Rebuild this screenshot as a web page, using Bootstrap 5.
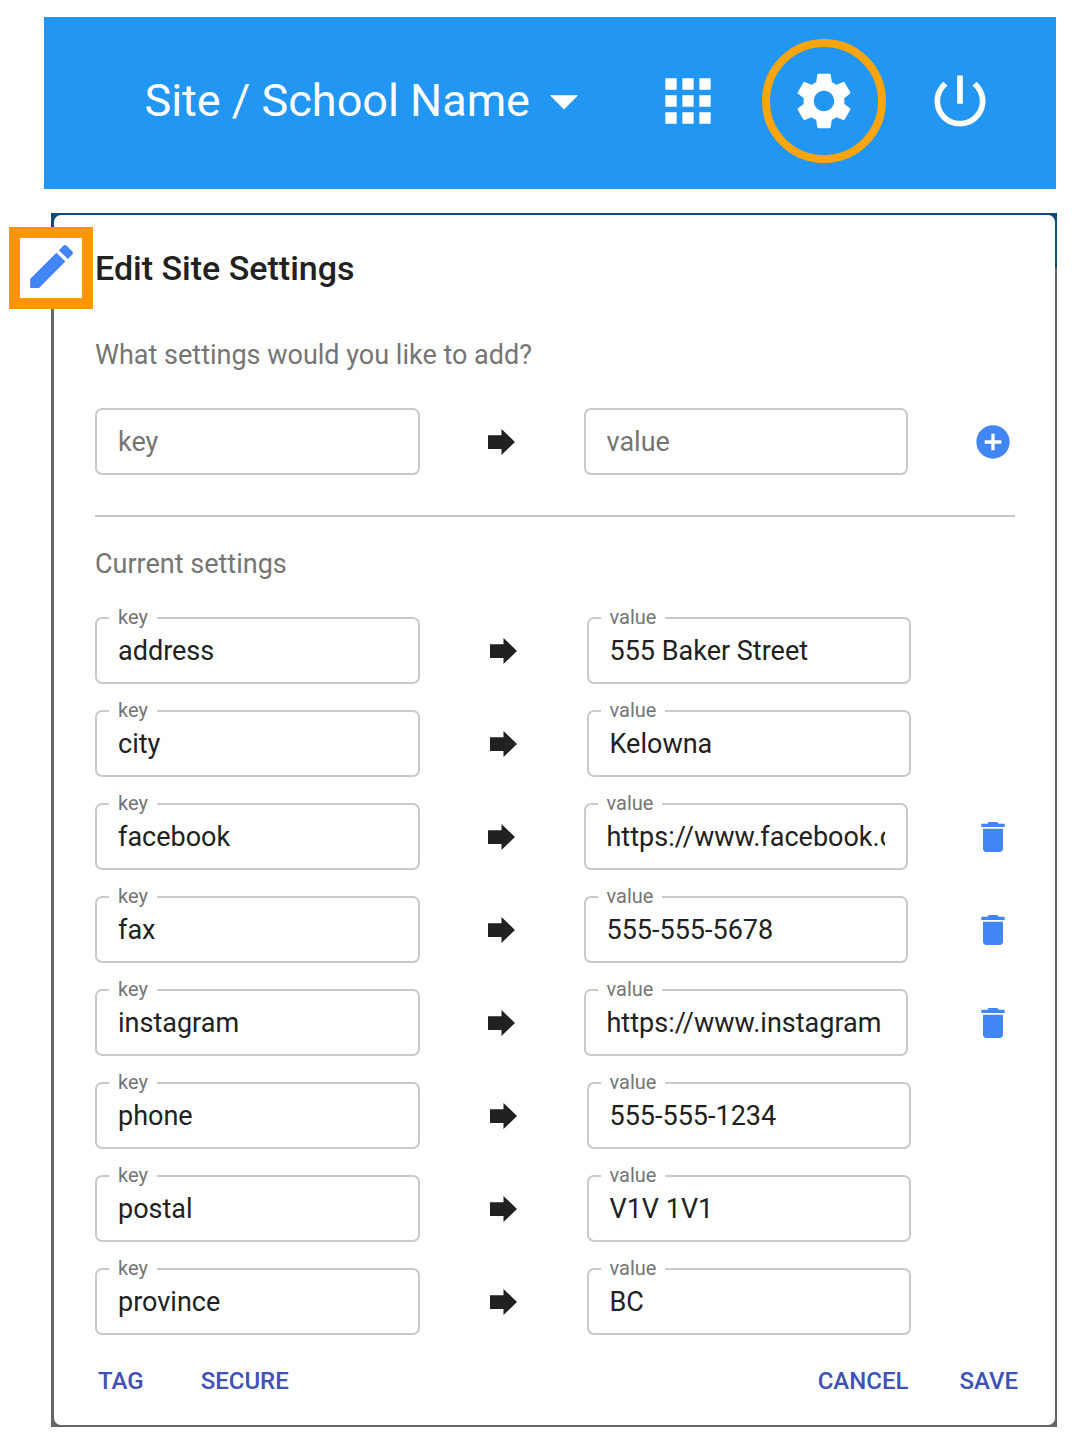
<!DOCTYPE html>
<html lang="en">
<head>
<meta charset="utf-8">
<meta name="viewport" content="width=device-width, initial-scale=1">
<title>Edit Site Settings</title>
<link href="https://cdn.jsdelivr.net/npm/bootstrap@5.3.0/dist/css/bootstrap.min.css" rel="stylesheet">
<style>
  body { font-family: Roboto, sans-serif; color: #212121; background: #fff; }
  svg { display: block; fill: currentColor; flex: none; }
  .bare { border: 0; background: none; padding: 0; color: inherit; }

  .app-bar { margin: 17px 26px 0 44px; padding: 22px 62px 26px 24px; background: #2196f3; color: #fff; }
  .app-bar svg { width: 68px; height: 68px; }
  .site-menu { font-size: 45px; line-height: 48px; margin-right: 56px; }
  .app-icons { gap: 40px; }
  .ringed { width: 124px; height: 124px; border: 8px solid #ffa50a; border-radius: 50%; }

  .backdrop-frame { margin: 24px 25px 21px 51px; padding: 2px 2px 2px 3px; background: linear-gradient(#0f4c7a 55px, #666 55px); }
  .settings-dialog { background: #fff; border-radius: 7px; padding: 29px 37px 26px 38px; }
  .dialog-part { padding: 0 3px; }
  .edit-mark { left: -42px; top: 14px; width: 84px; height: 82px; border: 11px solid #ff9500; background: #fff; color: #4285f4; }
  .edit-mark svg { width: 57px; height: 57px; }
  .dialog-title { font-size: 34px; line-height: 48px; font-weight: 500; margin: 0 0 47px; }
  .hint { font-size: 27px; line-height: 32px; font-weight: 400; color: #757575; margin: 0; }
  .rule-line { margin: 40px 0 31px; border-top: 2px solid #c8c8c8; opacity: 1; }

  .setting-list { gap: 26px; margin-top: 37px; }
  .field { flex: 1 1 0; min-width: 0; }
  .field .form-control { height: 67px; padding: 0 21px; font-size: 27px; line-height: 32px; color: #212121; border: 2px solid #cacaca; border-radius: 7px; }
  .field .form-control::placeholder { color: #757575; opacity: 1; }
  .field label { top: -12px; left: 14px; padding: 0 9px; background: #fff; color: #757575; font-size: 20px; line-height: 24px; }
  .arrow-cell { width: 164px; }
  .arrow-cell svg { width: 27px; height: 26px; }
  .action-cell { width: 107px; padding-right: 2px; color: #4285f4; }
  .action-cell svg { width: 40px; height: 40px; }
  .locked .arrow-cell { width: 167px; }
  .locked .action-cell { width: 104px; }

  .dialog-actions { margin-top: 28px; color: #3f51b5; padding-left: 6px; }
  .dialog-actions button { font-size: 24px; line-height: 36px; font-weight: 500; }
  .left-actions { gap: 57px; }
  .right-actions { gap: 51px; }
</style>
</head>
<body>
<svg class="d-none" aria-hidden="true">
  <symbol id="arrow" viewBox="0 0 27 26"><path d="M0 6.300H13.500V0L27 13 13.500 26V20H0z"/></symbol>
  <symbol id="trash" viewBox="0 0 24 24"><path d="M6 19c0 1.100.9 2 2 2h8c1.100 0 2-.9 2-2V7H6v12zM19 4h-3.500l-1-1h-5l-1 1H5v2h14V4z"/></symbol>
</svg>

<header class="app-bar d-flex align-items-center justify-content-end">
  <button type="button" class="bare site-menu d-flex align-items-center text-nowrap">Site / School Name
    <svg viewBox="0 0 24 24" aria-hidden="true"><path d="M7 10l5 5 5-5z"/></svg>
  </button>
  <nav class="app-icons d-flex align-items-center" aria-label="Site tools">
    <button type="button" class="bare" aria-label="Apps"><svg viewBox="0 0 24 24"><path d="M4 8h4V4H4v4zm6 12h4v-4h-4v4zm-6 0h4v-4H4v4zm0-6h4v-4H4v4zm6 0h4v-4h-4v4zm6-10v4h4V4h-4zm-6 4h4V4h-4v4zm6 6h4v-4h-4v4zm0 6h4v-4h-4v4z"/></svg></button>
    <button type="button" class="bare ringed d-flex align-items-center justify-content-center" aria-label="Settings"><svg viewBox="0 0 24 24"><path d="M19.140 12.940c.04-.3.060-.61.060-.94 0-.32-.02-.64-.07-.94l2.030-1.580c.18-.14.230-.41.120-.61l-1.920-3.320c-.12-.22-.37-.29-.59-.22l-2.390.96c-.5-.38-1.030-.7-1.620-.94l-.36-2.540c-.04-.24-.24-.41-.48-.41h-3.840c-.24 0-.43.170-.47.410l-.36 2.540c-.59.240-1.130.570-1.620.940l-2.390-.96c-.22-.08-.47 0-.59.220L2.740 8.870c-.12.210-.08.470.120.610l2.030 1.580c-.05.300-.09.630-.09.940s.02.640.070.940l-2.030 1.580c-.18.140-.23.410-.12.610l1.920 3.320c.12.220.370.290.590.220l2.390-.96c.5.380 1.030.700 1.620.940l.36 2.540c.05.240.240.410.480.410h3.840c.24 0 .440-.17.470-.41l.36-2.540c.59-.24 1.130-.56 1.620-.94l2.390.96c.22.080.470 0 .590-.22l1.920-3.320c.12-.22.070-.47-.12-.61l-2.010-1.580zM12 15.600c-1.980 0-3.600-1.620-3.600-3.600s1.620-3.600 3.600-3.600 3.600 1.620 3.600 3.600-1.620 3.600-3.600 3.600z"/></svg></button>
    <button type="button" class="bare" aria-label="Sign out"><svg viewBox="0 0 24 24"><path d="M13 3h-2v10h2V3zm4.830 2.170l-1.420 1.420C17.990 7.860 19 9.810 19 12c0 3.870-3.130 7-7 7s-7-3.130-7-7c0-2.190 1.010-4.140 2.580-5.420L6.170 5.170C4.230 6.820 3 9.260 3 12c0 4.970 4.030 9 9 9s9-4.030 9-9c0-2.740-1.230-5.180-3.170-6.830z"/></svg></button>
  </nav>
</header>

<main class="backdrop-frame position-relative">
  <form class="settings-dialog">
    <div class="edit-mark position-absolute d-flex align-items-center justify-content-center pb-1"><svg viewBox="0 0 24 24" aria-hidden="true"><path d="M3 17.250V21h3.750L17.810 9.940l-3.750-3.750L3 17.250zM20.710 7.040c.39-.39.390-1.020 0-1.410l-2.340-2.340c-.39-.39-1.020-.39-1.410 0l-1.830 1.830 3.750 3.750 1.830-1.830z"/></svg></div>
    <div class="dialog-part">
      <h1 class="dialog-title">Edit Site Settings</h1>
      <p class="hint">What settings would you like to add?</p>
      <div class="setting-list d-flex flex-column">
        <div class="d-flex align-items-center">
          <div class="field"><input class="form-control" type="text" placeholder="key" aria-label="New setting key"></div>
          <div class="arrow-cell d-flex justify-content-center"><svg aria-hidden="true"><use href="#arrow"/></svg></div>
          <div class="field"><input class="form-control" type="text" placeholder="value" aria-label="New setting value"></div>
          <div class="action-cell d-flex justify-content-end"><button type="button" class="bare" aria-label="Add setting"><svg viewBox="0 0 24 24"><path d="M12 2C6.480 2 2 6.480 2 12s4.480 10 10 10 10-4.480 10-10S17.520 2 12 2zm5 11h-4v4h-2v-4H7v-2h4V7h2v4h4v2z"/></svg></button></div>
        </div>
      </div>
      <hr class="rule-line">
      <h2 class="hint">Current settings</h2>
      <div class="setting-list d-flex flex-column">
        <div class="locked d-flex align-items-center">
          <div class="field position-relative"><label class="position-absolute" for="k1">key</label><input class="form-control" id="k1" type="text" value="address"></div>
          <div class="arrow-cell d-flex justify-content-center"><svg aria-hidden="true"><use href="#arrow"/></svg></div>
          <div class="field position-relative"><label class="position-absolute" for="v1">value</label><input class="form-control" id="v1" type="text" value="555 Baker Street"></div>
          <div class="action-cell"></div>
        </div>
        <div class="locked d-flex align-items-center">
          <div class="field position-relative"><label class="position-absolute" for="k2">key</label><input class="form-control" id="k2" type="text" value="city"></div>
          <div class="arrow-cell d-flex justify-content-center"><svg aria-hidden="true"><use href="#arrow"/></svg></div>
          <div class="field position-relative"><label class="position-absolute" for="v2">value</label><input class="form-control" id="v2" type="text" value="Kelowna"></div>
          <div class="action-cell"></div>
        </div>
        <div class="d-flex align-items-center">
          <div class="field position-relative"><label class="position-absolute" for="k3">key</label><input class="form-control" id="k3" type="text" value="facebook"></div>
          <div class="arrow-cell d-flex justify-content-center"><svg aria-hidden="true"><use href="#arrow"/></svg></div>
          <div class="field position-relative"><label class="position-absolute" for="v3">value</label><input class="form-control" id="v3" type="text" value="https://www.facebook.com"></div>
          <div class="action-cell d-flex justify-content-end"><button type="button" class="bare" aria-label="Delete facebook"><svg><use href="#trash"/></svg></button></div>
        </div>
        <div class="d-flex align-items-center">
          <div class="field position-relative"><label class="position-absolute" for="k4">key</label><input class="form-control" id="k4" type="text" value="fax"></div>
          <div class="arrow-cell d-flex justify-content-center"><svg aria-hidden="true"><use href="#arrow"/></svg></div>
          <div class="field position-relative"><label class="position-absolute" for="v4">value</label><input class="form-control" id="v4" type="text" value="555-555-5678"></div>
          <div class="action-cell d-flex justify-content-end"><button type="button" class="bare" aria-label="Delete fax"><svg><use href="#trash"/></svg></button></div>
        </div>
        <div class="d-flex align-items-center">
          <div class="field position-relative"><label class="position-absolute" for="k5">key</label><input class="form-control" id="k5" type="text" value="instagram"></div>
          <div class="arrow-cell d-flex justify-content-center"><svg aria-hidden="true"><use href="#arrow"/></svg></div>
          <div class="field position-relative"><label class="position-absolute" for="v5">value</label><input class="form-control" id="v5" type="text" value="https://www.instagram"></div>
          <div class="action-cell d-flex justify-content-end"><button type="button" class="bare" aria-label="Delete instagram"><svg><use href="#trash"/></svg></button></div>
        </div>
        <div class="locked d-flex align-items-center">
          <div class="field position-relative"><label class="position-absolute" for="k6">key</label><input class="form-control" id="k6" type="text" value="phone"></div>
          <div class="arrow-cell d-flex justify-content-center"><svg aria-hidden="true"><use href="#arrow"/></svg></div>
          <div class="field position-relative"><label class="position-absolute" for="v6">value</label><input class="form-control" id="v6" type="text" value="555-555-1234"></div>
          <div class="action-cell"></div>
        </div>
        <div class="locked d-flex align-items-center">
          <div class="field position-relative"><label class="position-absolute" for="k7">key</label><input class="form-control" id="k7" type="text" value="postal"></div>
          <div class="arrow-cell d-flex justify-content-center"><svg aria-hidden="true"><use href="#arrow"/></svg></div>
          <div class="field position-relative"><label class="position-absolute" for="v7">value</label><input class="form-control" id="v7" type="text" value="V1V 1V1"></div>
          <div class="action-cell"></div>
        </div>
        <div class="locked d-flex align-items-center">
          <div class="field position-relative"><label class="position-absolute" for="k8">key</label><input class="form-control" id="k8" type="text" value="province"></div>
          <div class="arrow-cell d-flex justify-content-center"><svg aria-hidden="true"><use href="#arrow"/></svg></div>
          <div class="field position-relative"><label class="position-absolute" for="v8">value</label><input class="form-control" id="v8" type="text" value="BC"></div>
          <div class="action-cell"></div>
        </div>
      </div>
    </div>
    <div class="dialog-actions d-flex justify-content-between">
      <div class="left-actions d-flex"><button type="button" class="bare">TAG</button><button type="button" class="bare">SECURE</button></div>
      <div class="right-actions d-flex"><button type="button" class="bare">CANCEL</button><button type="submit" class="bare">SAVE</button></div>
    </div>
  </form>
</main>
<script src="https://cdn.jsdelivr.net/npm/bootstrap@5.3.0/dist/js/bootstrap.bundle.min.js"></script>
</body>
</html>
